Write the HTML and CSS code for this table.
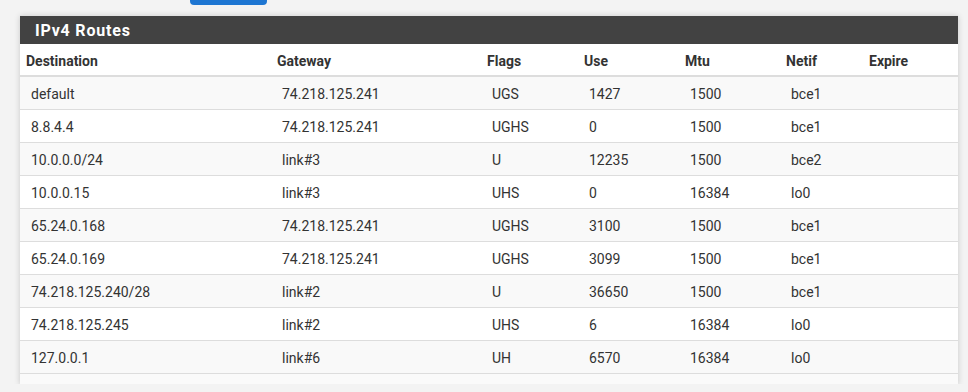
FILE: index.html
```html
<!DOCTYPE html>
<html>
<head>
<meta charset="utf-8">
<link rel="stylesheet" href="styles.css">
</head>
<body>
<div class="top">
  <div class="btn"></div>
</div>
<div class="panel">
  <div class="panel-heading"><h2 class="panel-title">IPv4 Routes</h2></div>
  <div class="panel-body">
    <table class="routes">
      <colgroup>
        <col class="c-dest"><col class="c-gw"><col class="c-flags"><col class="c-use"><col class="c-mtu"><col class="c-netif"><col class="c-exp">
      </colgroup>
      <thead>
        <tr><th>Destination</th><th>Gateway</th><th>Flags</th><th>Use</th><th>Mtu</th><th>Netif</th><th>Expire</th></tr>
      </thead>
      <tbody>
        <tr><td>default</td><td>74.218.125.241</td><td>UGS</td><td>1427</td><td>1500</td><td>bce1</td><td></td></tr>
        <tr><td>8.8.4.4</td><td>74.218.125.241</td><td>UGHS</td><td>0</td><td>1500</td><td>bce1</td><td></td></tr>
        <tr><td>10.0.0.0/24</td><td>link#3</td><td>U</td><td>12235</td><td>1500</td><td>bce2</td><td></td></tr>
        <tr><td>10.0.0.15</td><td>link#3</td><td>UHS</td><td>0</td><td>16384</td><td>lo0</td><td></td></tr>
        <tr><td>65.24.0.168</td><td>74.218.125.241</td><td>UGHS</td><td>3100</td><td>1500</td><td>bce1</td><td></td></tr>
        <tr><td>65.24.0.169</td><td>74.218.125.241</td><td>UGHS</td><td>3099</td><td>1500</td><td>bce1</td><td></td></tr>
        <tr><td>74.218.125.240/28</td><td>link#2</td><td>U</td><td>36650</td><td>1500</td><td>bce1</td><td></td></tr>
        <tr><td>74.218.125.245</td><td>link#2</td><td>UHS</td><td>6</td><td>16384</td><td>lo0</td><td></td></tr>
        <tr><td>127.0.0.1</td><td>link#6</td><td>UH</td><td>6570</td><td>16384</td><td>lo0</td><td></td></tr>
      </tbody>
    </table>
  </div>
</div>
</body>
</html>
```
FILE: styles.css
```css
html, body {
  margin: 0;
  padding: 0;
  background: #f3f3f3;
  font-family: Roboto, "Liberation Sans", sans-serif;
  font-size: 14px;
  color: #333;
}
.top {
  height: 15px;
  padding-left: 190px;
}
.btn {
  width: 77px;
  height: 5px;
  background: #1e76d2;
  border-radius: 0 0 4px 4px;
}
.panel {
  margin-left: 20px;
  width: 938px;
  background: #fafafa;
  border-top: 1px solid #e2e2e2;
  box-shadow: 0 1px 6px rgba(0,0,0,0.18);
  padding-bottom: 10px;
}
.panel-heading {
  background: #424242;
  height: 28px;
  padding-left: 15px;
  display: flex;
  align-items: center;
}
.panel-title {
  margin: 0;
  color: #fff;
  font-size: 16px;
  font-weight: bold;
  letter-spacing: 0.8px;
  line-height: 20px;
  padding-top: 1px;
}
.panel-body {
  background: #fff;
}
.routes {
  width: 100%;
  border-collapse: collapse;
  table-layout: fixed;
}
.c-dest { width: 251px; }
.c-gw { width: 210px; }
.c-flags { width: 97px; }
.c-use { width: 101px; }
.c-mtu { width: 101px; }
.c-netif { width: 83px; }
.routes th {
  text-align: left;
  font-weight: bold;
  color: #333;
  padding: 7px 6px 4px;
  line-height: 20px;
  height: 20px;
  border-bottom: 2px solid #ddd;
  background: #fff;
}
.routes td {
  padding: 7px 6px 5px 11px;
  line-height: 20px;
  height: 20px;
  border-top: 1px solid #ddd;
  color: #333;
}
.routes tbody tr:first-child td {
  border-top: none;
}
.routes tbody tr:nth-child(odd) td {
  background: #f9f9f9;
}
.routes tbody tr:nth-child(even) td {
  background: #fff;
}
.routes tbody tr:last-child td {
  border-bottom: 1px solid #ddd;
}
```
